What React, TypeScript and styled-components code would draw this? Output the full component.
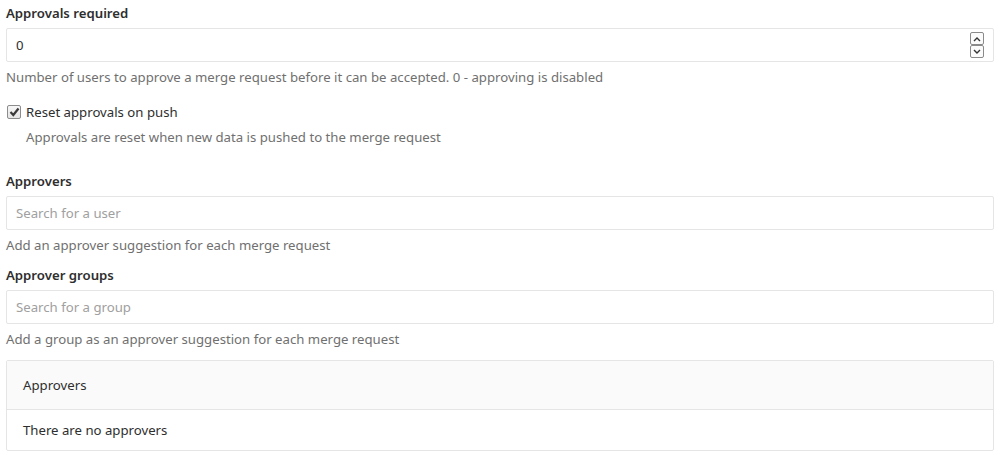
import React from "react";
import styled, { createGlobalStyle } from "styled-components";

const GlobalStyle = createGlobalStyle`
  html, body {
    margin: 0;
    padding: 0;
    background: #fff;
  }
  body {
    font-family: "Noto Sans", "Liberation Sans", sans-serif;
    font-size: 13.2px;
    color: #2e2e2e;
  }
`;

const Page = styled.div`
  width: 988px;
  padding: 4px 10px 0 6px;
  display: flex;
  flex-direction: column;
`;

const Group = styled.div<{ $gap?: number }>`
  display: flex;
  flex-direction: column;
  margin-bottom: ${({ $gap }) => $gap ?? 0}px;
`;

const Label = styled.label`
  font-weight: 600;
  font-size: 13.2px;
  line-height: 18px;
  margin-bottom: 6px;
`;

const InputWrap = styled.div`
  position: relative;
`;

const Input = styled.input`
  box-sizing: border-box;
  width: 100%;
  height: 34px;
  border: 1px solid #e5e5e5;
  border-radius: 2px;
  padding: 0 9px;
  font-family: inherit;
  font-size: 13.2px;
  color: #2e2e2e;
  outline: none;
  &::placeholder {
    color: #a0a0a0;
  }
`;

const Spinner = styled.div`
  position: absolute;
  right: 10px;
  top: 4px;
  display: flex;
  flex-direction: column;
`;

const SpinButton = styled.div`
  width: 12px;
  height: 11px;
  border: 1px solid #8a8a8a;
  border-radius: 2px;
  background: #fbfbfb;
  display: flex;
  align-items: center;
  justify-content: center;
`;

const Help = styled.p`
  margin: 6px 0 0;
  font-size: 13.2px;
  line-height: 18px;
  color: #707070;
`;

const CheckRow = styled.label`
  display: flex;
  align-items: center;
  gap: 5px;
  font-size: 13.2px;
  line-height: 18px;
`;

const Box = styled.span`
  box-sizing: border-box;
  width: 14px;
  height: 14px;
  border: 1px solid #8c8c8c;
  border-radius: 2px;
  background: linear-gradient(#f6f6f6, #e4e4e4);
  display: flex;
  align-items: center;
  justify-content: center;
  margin-left: 1px;
`;

const CheckHelp = styled(Help)`
  margin: 7px 0 0 20px;
`;

const Panel = styled.div`
  border: 1px solid #e5e5e5;
  border-radius: 2px;
  margin-top: 12px;
`;

const PanelHeader = styled.div`
  background: #fafafa;
  border-bottom: 1px solid #e5e5e5;
  height: 48px;
  padding: 0 16px;
  display: flex;
  align-items: center;
`;

const PanelBody = styled.div`
  height: 40px;
  padding: 0 16px;
  display: flex;
  align-items: center;
`;

const Chevron = ({ up }: { up?: boolean }) => (
  <svg width="8" height="6" viewBox="0 0 8 6">
    <path
      d={up ? "M1 5 L4 2 L7 5" : "M1 1 L4 4 L7 1"}
      stroke="#333"
      strokeWidth="1.4"
      fill="none"
    />
  </svg>
);

export default function App() {
  return (
    <>
      <GlobalStyle />
      <Page>
        <Group $gap={17}>
          <Label>Approvals required</Label>
          <InputWrap>
            <Input type="text" defaultValue="0" />
            <Spinner>
              <SpinButton>
                <Chevron up />
              </SpinButton>
              <SpinButton>
                <Chevron />
              </SpinButton>
            </Spinner>
          </InputWrap>
          <Help>
            Number of users to approve a merge request before it can be accepted. 0 - approving is disabled
          </Help>
        </Group>

        <Group $gap={26}>
          <CheckRow>
            <Box>
              <svg width="11" height="10" viewBox="0 0 11 10">
                <path d="M1.5 5 L4.3 8 L9.5 1.5" stroke="#3a3a3a" strokeWidth="2.2" fill="none" />
              </svg>
            </Box>
            Reset approvals on push
          </CheckRow>
          <CheckHelp>Approvals are reset when new data is pushed to the merge request</CheckHelp>
        </Group>

        <Group $gap={12}>
          <Label>Approvers</Label>
          <Input placeholder="Search for a user" />
          <Help>Add an approver suggestion for each merge request</Help>
        </Group>

        <Group>
          <Label>Approver groups</Label>
          <Input placeholder="Search for a group" />
          <Help>Add a group as an approver suggestion for each merge request</Help>
        </Group>

        <Panel>
          <PanelHeader>Approvers</PanelHeader>
          <PanelBody>There are no approvers</PanelBody>
        </Panel>
      </Page>
    </>
  );
}
